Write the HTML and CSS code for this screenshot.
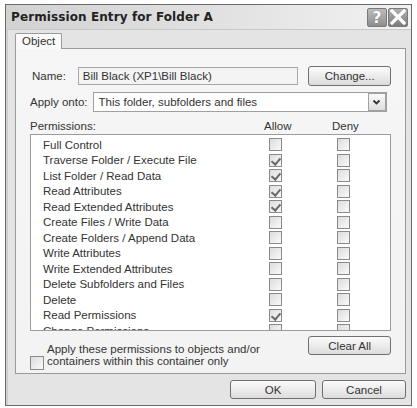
FILE: index.html
```html
<!DOCTYPE html>
<html>
<head>
<meta charset="utf-8">
<link rel="stylesheet" href="styles.css">
</head>
<body>
<div class="window">
  <div class="titlebar">
    <span class="title">Permission Entry for Folder A</span>
    <div class="tbtns">
      <span class="tbtn help">?</span>
      <span class="tbtn close"><svg width="16" height="16" viewBox="0 0 16 16"><path d="M2 2 L14 14 M14 2 L2 14" stroke="#fff" stroke-width="3.2" stroke-linecap="square"/></svg></span>
    </div>
  </div>
  <div class="client">
    <div class="tabs"><span class="tab">Object</span></div>
    <div class="panel">
      <div class="row name-row">
        <span class="lbl name-lbl">Name:</span>
        <span class="field">Bill Black (XP1\Bill Black)</span>
        <span class="btn change">Change...</span>
      </div>
      <div class="row apply-row">
        <span class="lbl">Apply onto:</span>
        <span class="combo"><span class="combo-text">This folder, subfolders and files</span><span class="drop"><svg width="9" height="6" viewBox="0 0 9 6"><path d="M1.5 1.5 L4.5 4.5 L7.5 1.5" stroke="#333" stroke-width="1.8" fill="none"/></svg></span></span>
      </div>
      <div class="perm-head">
        <span class="ph-name">Permissions:</span>
        <span class="ph-allow">Allow</span>
        <span class="ph-deny">Deny</span>
      </div>
      <div class="list">
        <div class="rows">
          <div class="prow"><span class="pn">Full Control</span><span class="cb"></span><span class="cb"></span></div>
          <div class="prow"><span class="pn">Traverse Folder / Execute File</span><span class="cb on"></span><span class="cb"></span></div>
          <div class="prow"><span class="pn">List Folder / Read Data</span><span class="cb on"></span><span class="cb"></span></div>
          <div class="prow"><span class="pn">Read Attributes</span><span class="cb on"></span><span class="cb"></span></div>
          <div class="prow"><span class="pn">Read Extended Attributes</span><span class="cb on"></span><span class="cb"></span></div>
          <div class="prow"><span class="pn">Create Files / Write Data</span><span class="cb"></span><span class="cb"></span></div>
          <div class="prow"><span class="pn">Create Folders / Append Data</span><span class="cb"></span><span class="cb"></span></div>
          <div class="prow"><span class="pn">Write Attributes</span><span class="cb"></span><span class="cb"></span></div>
          <div class="prow"><span class="pn">Write Extended Attributes</span><span class="cb"></span><span class="cb"></span></div>
          <div class="prow"><span class="pn">Delete Subfolders and Files</span><span class="cb"></span><span class="cb"></span></div>
          <div class="prow"><span class="pn">Delete</span><span class="cb"></span><span class="cb"></span></div>
          <div class="prow"><span class="pn">Read Permissions</span><span class="cb on"></span><span class="cb"></span></div>
          <div class="prow"><span class="pn">Change Permissions</span><span class="cb"></span><span class="cb"></span></div>
        </div>
        <div class="scrollbar">
          <span class="sb-btn"><svg width="9" height="6" viewBox="0 0 9 6"><path d="M1.5 4.5 L4.5 1.5 L7.5 4.5" stroke="#333" stroke-width="1.8" fill="none"/></svg></span>
          <div class="sb-track">
            <div class="sb-thumb"><span class="grip"></span></div>
          </div>
          <span class="sb-btn"><svg width="9" height="6" viewBox="0 0 9 6"><path d="M1.5 1.5 L4.5 4.5 L7.5 1.5" stroke="#333" stroke-width="1.8" fill="none"/></svg></span>
        </div>
      </div>
      <div class="bottom-row">
        <span class="cb big"></span>
        <span class="apply-text">Apply these permissions to objects and/or<br>containers within this container only</span>
        <span class="btn clear">Clear All</span>
      </div>
    </div>
    <div class="footer">
      <span class="btn ok">OK</span>
      <span class="btn cancel">Cancel</span>
    </div>
  </div>
</div>
</body>
</html>
```

FILE: styles.css
```css
* { box-sizing: border-box; }
html, body { margin: 0; padding: 0; background: #fff; }
body {
  font-family: "Liberation Sans", Arial, sans-serif;
  font-size: 11.5px;
  color: #333;
  padding: 4px 0 0 5px;
}
.window {
  width: 407px;
  height: 402px;
  border: 1px solid #6a6a6a;
  background: #e4e4e4;
  display: flex;
  flex-direction: column;
}
.titlebar {
  height: 25px;
  background: linear-gradient(to right, #d2d2d2 0%, #e2e2e2 55%, #f2f2f2 100%);
  display: flex;
  align-items: center;
  justify-content: space-between;
  padding: 0 3px 0 5px;
  border-bottom: 1px solid #c8c8c8;
}
.title {
  font-family: "DejaVu Sans", Verdana, sans-serif;
  font-weight: bold;
  font-size: 12px;
  color: #222;
  letter-spacing: 0.1px;
}
.tbtns { display: flex; gap: 1px; }
.tbtn {
  width: 20px;
  height: 19px;
  border: 1px solid #7a7a7a;
  border-radius: 2px;
  display: flex;
  align-items: center;
  justify-content: center;
  background: linear-gradient(#bdbdbd, #8e8e8e);
}
.help {
  color: #fff;
  font-family: "DejaVu Sans", sans-serif;
  font-weight: bold;
  font-size: 16px;
  text-shadow: 0 0 1px #555;
}
.close { background: linear-gradient(#b0b0b0, #7c7c7c); }
.client {
  flex: 1;
  padding: 3px 5px 0 7px;
  border-left: 2px solid #cfcfcf;
  display: flex;
  flex-direction: column;
}
.tabs { display: flex; height: 15px; padding-left: 0; }
.tab {
  height: 16px;
  padding: 1px 6px 0 6px;
  background: #fafafa;
  border: 1px solid #9a9a9a;
  border-bottom: none;
  border-radius: 2px 2px 0 0;
  font-size: 11.5px;
  position: relative;
  z-index: 1;
}
.panel {
  height: 326px;
  border: 1px solid #9a9a9a;
  background: linear-gradient(#f6f6f6, #f3f3f3);
  padding: 17px 14px 0 14px;
}
.row { display: flex; align-items: center; }
.lbl { color: #333; }
.name-row { height: 20px; margin-left: 2px; }
.name-lbl { width: 46px; }
.field {
  width: 222px;
  height: 18px;
  border: 1px solid #a8a8a8;
  background: #f4f4f4;
  padding: 1px 0 0 4px;
  line-height: 15px;
}
.btn {
  display: flex;
  align-items: center;
  justify-content: center;
  height: 20px;
  border: 1px solid #707070;
  border-radius: 3px;
  background: linear-gradient(#fbfbfb 0%, #ececec 50%, #dcdcdc 100%);
  color: #333;
}
.change { width: 83px; margin-left: 10px; }
.apply-row { margin-top: 6px; height: 20px; }
.combo {
  margin-left: 5px;
  width: 294px;
  height: 20px;
  border: 1px solid #a0a0a0;
  background: #fff;
  display: flex;
  align-items: center;
  justify-content: space-between;
  padding-left: 5px;
}
.drop {
  width: 18px;
  height: 18px;
  border: 1px solid #a0a0a0;
  background: linear-gradient(#fafafa, #dedede);
  display: flex;
  align-items: center;
  justify-content: center;
}
.perm-head {
  display: flex;
  margin-top: 6px;
  height: 16px;
  align-items: center;
}
.ph-name { width: 234px; }
.ph-allow { width: 68px; }
.list {
  margin-top: 0;
  height: 197px;
  border: 1px solid #9c9c9c;
  background: #fff;
  display: flex;
  overflow: hidden;
}
.rows { flex: 1; padding: 2px 0 0 12px; }
.prow {
  height: 15.5px;
  display: flex;
  align-items: center;
}
.pn { width: 226px; white-space: nowrap; }
.cb {
  width: 13px;
  height: 13px;
  border: 1px solid #8a8a8a;
  background: linear-gradient(135deg, #dcdcdc, #fafafa);
  margin-right: 55px;
  position: relative;
  flex: none;
}
.cb.on::after {
  content: "";
  position: absolute;
  left: 3px;
  top: 1px;
  width: 4px;
  height: 7px;
  border-right: 2px solid #6a6a6a;
  border-bottom: 2px solid #6a6a6a;
  transform: rotate(40deg);
}
.scrollbar {
  width: 17px;
  display: flex;
  flex-direction: column;
  background: #f4f4f4;
  border-left: 1px solid #e6e6e6;
}
.sb-btn {
  height: 16px;
  border: 1px solid #a5a5a5;
  border-radius: 2px;
  background: linear-gradient(#fcfcfc, #e0e0e0);
  display: flex;
  align-items: center;
  justify-content: center;
}
.sb-track { flex: 1; padding: 0 0 18px; }
.sb-thumb {
  height: 100%;
  border: 1px solid #a5a5a5;
  border-radius: 2px;
  background: linear-gradient(to right, #f2f2f2, #dedede);
  display: flex;
  align-items: center;
  justify-content: center;
}
.grip { width: 5px; height: 5px; border: 1px solid #d0d0d0; background: #e8e8e8; }
.bottom-row {
  display: flex;
  align-items: flex-start;
  margin-top: 5px;
}
.cb.big { margin: 20px 0 0 0; width: 14px; height: 14px; }
.apply-text {
  margin-left: 3px;
  width: 263px;
  line-height: 11.5px;
  font-size: 11.5px;
  margin-top: 8px;
}
.clear { width: 83px; margin-left: 0; height: 19px; }
.footer {
  display: flex;
  justify-content: flex-end;
  gap: 6px;
  padding: 6px 0 0 0;
}
.ok, .cancel { width: 86px; height: 19px; }
.cancel { width: 84px; }
```
